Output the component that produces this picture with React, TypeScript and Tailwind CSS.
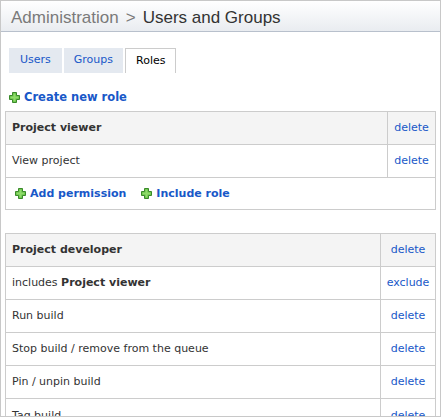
import React from 'react';

const font = { fontFamily: '"DejaVu Sans", Verdana, Tahoma, sans-serif' };

function PlusIcon() {
  return (
    <svg width="11" height="11" viewBox="0 0 11 11" className="shrink-0">
      <path
        d="M3.5 0.5h4v3h3v4h-3v3h-4v-3h-3v-4h3z"
        fill="#62bc45"
        stroke="#3a8a2a"
        strokeWidth="1"
      />
      <path d="M4.5 1.5h2v3h3v2h-3v3h-2v-3h-3v-2h3z" fill="#8fdc6a" />
    </svg>
  );
}

function AddLink({ label }: { label: string }) {
  return (
    <a className="flex items-center gap-[4px] font-bold text-[#1858c8] cursor-pointer">
      <PlusIcon />
      <span>{label}</span>
    </a>
  );
}

type Row = { text: React.ReactNode; action: string };

function RoleTable({
  name,
  rows,
  actionWidth,
  footer,
}: {
  name: string;
  rows: Row[];
  actionWidth: string;
  footer?: boolean;
}) {
  return (
    <div className="border border-[#cccccc] text-[11px]">
      <div className="flex h-[33px] bg-[#f4f4f4] border-b border-[#cccccc]">
        <div className="flex-1 flex items-center px-[6px] font-bold text-[#333]">{name}</div>
        <div className={`${actionWidth} flex items-center justify-center border-l border-[#cccccc] text-[#1858c8]`}>
          delete
        </div>
      </div>
      {rows.map((r, i) => (
        <div key={i} className="flex h-[33px] border-b border-[#cccccc] last:border-b-0">
          <div className="flex-1 flex items-center px-[6px] text-[#333]">{r.text}</div>
          <div className={`${actionWidth} flex items-center justify-center border-l border-[#cccccc] text-[#1858c8]`}>
            {r.action}
          </div>
        </div>
      ))}
      {footer && (
        <div className="flex items-center gap-[15px] h-[31px] px-[9px]">
          <AddLink label="Add permission" />
          <AddLink label="Include role" />
        </div>
      )}
    </div>
  );
}

export default function App() {
  return (
    <div className="w-[441px] h-[417px] overflow-hidden border border-[#c8c8c8] bg-white" style={font}>
      <div
        className="h-[31px] flex items-center pt-[3px] px-[10px] bg-gradient-to-b from-white to-[#e9ecf0] border-b border-[#b8c0cc] text-[17px]"
        style={{ fontFamily: '"Liberation Sans", Arial, sans-serif' }}
      >
        <span className="text-[#7a7a7a]">Administration</span>
        <span className="text-[#7a7a7a] mx-[7px]">&gt;</span>
        <span className="text-[#333]">Users and Groups</span>
      </div>

      <div className="flex items-end gap-[2px] pl-[8px] pt-[16px] text-[11px]">
        <div className="h-[25px] px-[11px] flex items-center bg-[#e4e9f0] text-[#1858c8]">Users</div>
        <div className="h-[25px] px-[10px] flex items-center bg-[#e4e9f0] text-[#1858c8]">Groups</div>
        <div className="h-[25px] px-[10px] flex items-center bg-white border border-b-0 border-[#cccccc] text-black">
          Roles
        </div>
      </div>

      <div className="px-[4px]">
        <div className="pt-[16px] pb-[5px] pl-[4px] text-[11.5px]">
          <AddLink label="Create new role" />
        </div>

        <RoleTable
          name="Project viewer"
          actionWidth="w-[48px]"
          rows={[{ text: 'View project', action: 'delete' }]}
          footer
        />

        <div className="h-[23px]" />

        <RoleTable
          name="Project developer"
          actionWidth="w-[55px]"
          rows={[
            {
              text: (
                <span>
                  includes <b>Project viewer</b>
                </span>
              ),
              action: 'exclude',
            },
            { text: 'Run build', action: 'delete' },
            { text: 'Stop build / remove from the queue', action: 'delete' },
            { text: 'Pin / unpin build', action: 'delete' },
            { text: 'Tag build', action: 'delete' },
          ]}
        />
      </div>
    </div>
  );
}
